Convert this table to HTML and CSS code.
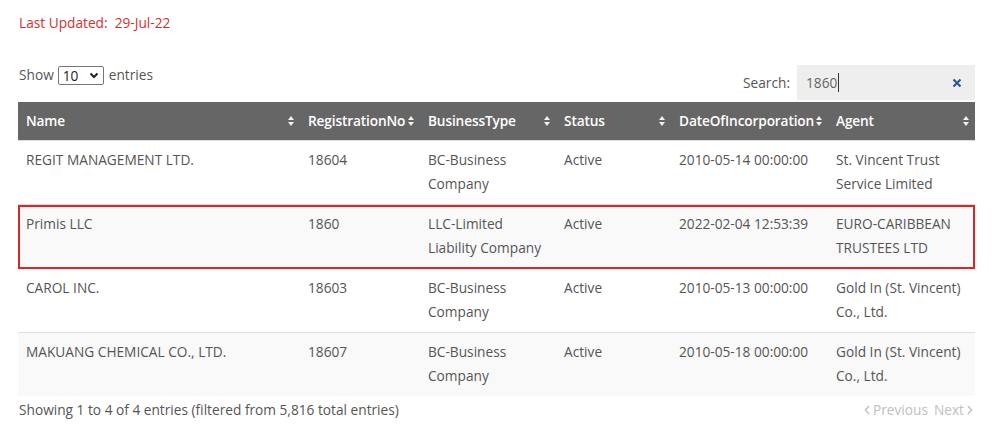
FILE: index.html
```html
<!DOCTYPE html>
<html>
<head>
<meta charset="utf-8">
<link rel="stylesheet" href="styles.css">
</head>
<body>
<div class="page">
  <p class="updated">Last Updated:&nbsp; 29-Jul-22</p>
  <div class="controls">
    <div class="length">
      Show
      <span class="select">10<svg class="chev" width="10" height="7" viewBox="0 0 10 7"><path d="M1.5 1.5 L5 5 L8.5 1.5" fill="none" stroke="#222" stroke-width="2"/></svg></span>
      entries
    </div>
    <div class="search">
      <span class="search-label">Search:</span>
      <div class="search-box"><span class="search-val">1860</span><span class="caret"></span>
        <svg class="clear" width="10" height="10" viewBox="0 0 10 10"><path d="M1.5 1.5 L8.5 8.5 M8.5 1.5 L1.5 8.5" stroke="#2b5b8e" stroke-width="2.2"/></svg>
      </div>
    </div>
  </div>
  <table class="grid">
    <colgroup>
      <col class="c-name"><col class="c-reg"><col class="c-bt"><col class="c-status"><col class="c-date"><col class="c-agent">
    </colgroup>
    <thead>
      <tr>
        <th>Name<span class="sort"></span></th>
        <th>RegistrationNo<span class="sort"></span></th>
        <th>BusinessType<span class="sort"></span></th>
        <th>Status<span class="sort"></span></th>
        <th>DateOfIncorporation<span class="sort"></span></th>
        <th>Agent<span class="sort"></span></th>
      </tr>
    </thead>
    <tbody>
      <tr>
        <td>REGIT MANAGEMENT LTD.</td><td>18604</td><td>BC-Business Company</td><td>Active</td><td>2010-05-14 00:00:00</td><td>St. Vincent Trust Service Limited</td>
      </tr>
      <tr class="even marked">
        <td>Primis LLC</td><td>1860</td><td>LLC-Limited Liability Company</td><td>Active</td><td>2022-02-04 12:53:39</td><td>EURO-CARIBBEAN TRUSTEES LTD</td>
      </tr>
      <tr>
        <td>CAROL INC.</td><td>18603</td><td>BC-Business Company</td><td>Active</td><td>2010-05-13 00:00:00</td><td>Gold In (St. Vincent) Co., Ltd.</td>
      </tr>
      <tr class="even">
        <td>MAKUANG CHEMICAL CO., LTD.</td><td>18607</td><td>BC-Business Company</td><td>Active</td><td>2010-05-18 00:00:00</td><td>Gold In (St. Vincent) Co., Ltd.</td>
      </tr>
    </tbody>
  </table>
  <div class="footer">
    <span class="info">Showing 1 to 4 of 4 entries (filtered from 5,816 total entries)</span>
    <span class="pager">
      <span class="pg"><svg width="6" height="10" viewBox="0 0 6 10"><path d="M5 1 L1.5 5 L5 9" fill="none" stroke="#c4c4c4" stroke-width="1.6"/></svg>Previous</span>
      <span class="pg">Next<svg width="6" height="10" viewBox="0 0 6 10"><path d="M1 1 L4.5 5 L1 9" fill="none" stroke="#c4c4c4" stroke-width="1.6"/></svg></span>
    </span>
  </div>
</div>
</body>
</html>
```
FILE: styles.css
```css
* { box-sizing: border-box; }
html, body { margin: 0; padding: 0; background: #fff; }
body {
  font-family: "Open Sans", "Noto Sans", sans-serif;
  font-size: 13.7px;
  color: #555;
}
.page {
  width: 957px;
  margin-left: 18px;
  padding-top: 13px;
}
.updated {
  margin: 0;
  line-height: 20px;
  color: #d2322d;
  padding-left: 1px;
}
.controls {
  margin-top: 32px;
  display: flex;
  justify-content: space-between;
  align-items: flex-start;
}
.length {
  line-height: 20px;
  display: flex;
  align-items: center;
  gap: 4px;
  padding-left: 1px;
}
.select {
  display: inline-flex;
  align-items: center;
  justify-content: space-between;
  width: 46px;
  height: 19px;
  border: 1px solid #767676;
  border-radius: 2px;
  padding: 0 4px 0 4px;
  color: #222;
  line-height: 17px;
  margin: 0 1px 0 0;
}
.search {
  display: flex;
  align-items: center;
  gap: 7px;
}
.search-label { line-height: 35px; color: #555; }
.search-box {
  width: 178px;
  height: 35px;
  background: #eee;
  display: flex;
  align-items: center;
  padding: 0 13px 0 9px;
  color: #666;
}
.search-val { line-height: 20px; }
.caret { width: 1px; height: 19px; background: #333; margin-left: 1px; }
.clear { margin-left: auto; }
.grid {
  margin-top: 2px;
  width: 957px;
  border-collapse: collapse;
  table-layout: fixed;
}
.c-name { width: 282px; }
.c-reg { width: 120px; }
.c-bt { width: 136px; }
.c-status { width: 115px; }
.c-date { width: 157px; }
.c-agent { width: 147px; }
.grid th {
  background: #666;
  color: #fff;
  font-weight: 600;
  text-align: left;
  padding: 8px 16px 8px 8px;
  line-height: 22px;
  position: relative;
  white-space: nowrap;
  letter-spacing: -0.15px;
}
.sort {
  position: absolute;
  right: 5px;
  top: 14px;
  width: 7px;
  height: 10px;
}
.sort::before, .sort::after {
  content: "";
  position: absolute;
  left: 0;
  border-left: 3.5px solid transparent;
  border-right: 3.5px solid transparent;
}
.sort::before { top: 0; border-bottom: 4px solid #f2f2f2; }
.sort::after { bottom: 0; border-top: 4px solid #f2f2f2; }
.grid td {
  padding: 7px 8px 8px;
  line-height: 24px;
  vertical-align: top;
  color: #555;
  border-top: 1px solid #ddd;
}
.grid tr.even td { background: #f9f9f9; }
.grid tr.marked {
  outline: 2px solid #d9262b;
  outline-offset: -2px;
}
.footer {
  display: flex;
  justify-content: space-between;
  align-items: center;
  padding-top: 4px;
  line-height: 20px;
}
.info { padding-left: 1px; }
.pager {
  display: flex;
  gap: 6px;
  color: #c0c0c0;
  padding-right: 2px;
}
.pg { display: inline-flex; align-items: center; gap: 3px; }
```
